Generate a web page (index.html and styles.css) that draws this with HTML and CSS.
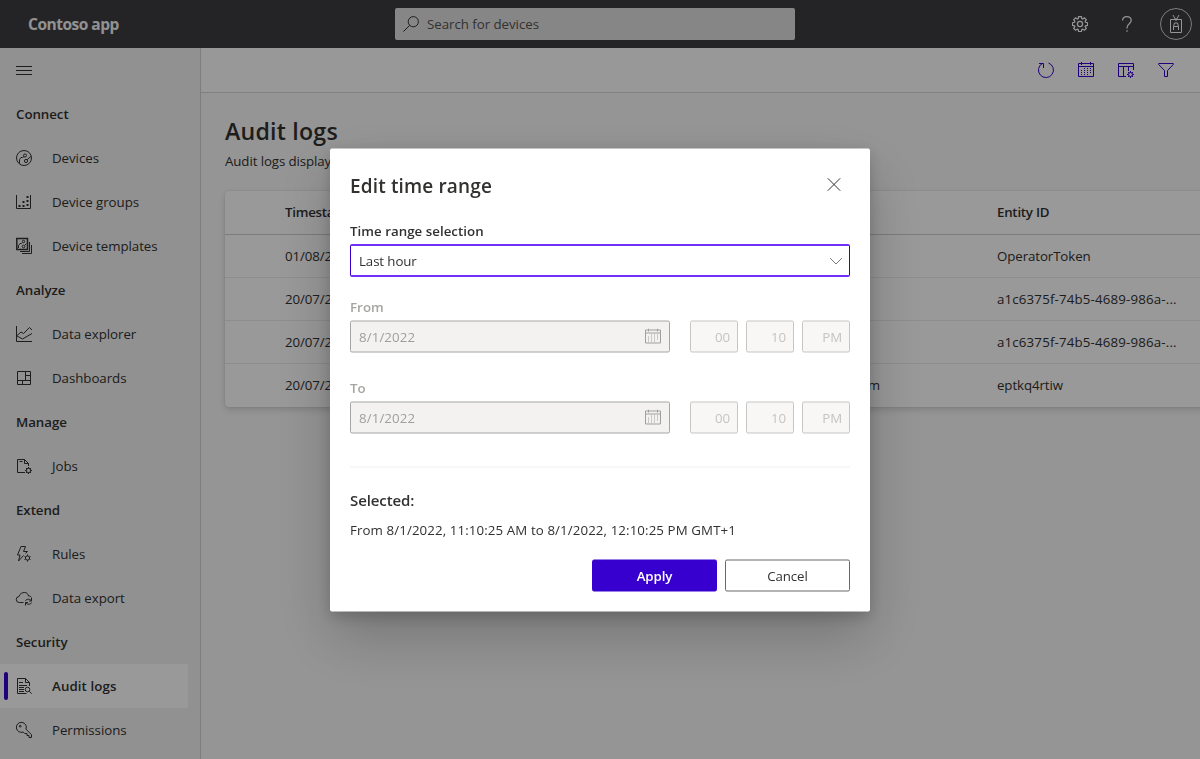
FILE: index.html
```html
<!DOCTYPE html>
<html lang="en">
<head>
<meta charset="utf-8">
<title>Audit logs</title>
<link rel="stylesheet" href="styles.css">
</head>
<body>
<svg class="defs" width="0" height="0" aria-hidden="true">
  <symbol id="cog" viewBox="0 0 16 16"><path d="M6.600.6h2.800l.4 2 .9.4 1.700-1.200 1.900 1.900L13.100 5.400l.4.9 2 .4v2.700l-2 .4-.4.9 1.200 1.700-1.900 1.900-1.700-1.200-.9.4-.4 2H6.600l-.4-2-.9-.4-1.700 1.200-1.900-1.900 1.200-1.700-.4-.9-2-.4V6.700l2-.4.4-.9L1.700 3.700l1.900-1.900L5.300 3l.9-.4z"/><circle cx="8" cy="8" r="2.600"/></symbol>
  <symbol id="calendar" viewBox="0 0 16 16"><path d="M.5 1.500h15v13H.5zM.5 4.500h15M3.500 0v3M12.500 0v3"/><path d="M6 6.500h7M3 8.500h10M3 10.500h10M3 12.500h7" stroke-dasharray="1 2"/></symbol>
</svg>
<div class="app">
  <header class="topbar">
    <div class="brand">Contoso app</div>
    <div class="search">
      <svg class="icon" viewBox="0 0 16 16"><circle cx="10.300" cy="5.700" r="5.100"/><path d="M6.600 9.400L.4 15.600"/></svg>
      <span>Search for devices</span>
    </div>
    <div class="tools">
      <svg class="icon gear"><use href="#cog"/></svg>
      <svg class="icon help" viewBox="0 0 16 16"><path d="M3.600 4.500C3.600 2 5.300.6 7.800.6s4.400 1.500 4.400 3.900C12.200 7.600 8 8 8 11.700v.8M8 14.300v1.500"/></svg>
      <div class="avatar"><svg viewBox="0 0 16 18"><path d="M2.500 4.500h11v13h-11zM5 0l2.500 4.500M11 0L8.500 4.500M8 3v3"/><path d="M5.500 15v-3.500h5V15M5.500 11.500l1-3.500h3l1 3.500" /></svg></div>
    </div>
  </header>
  <div class="body">
    <nav class="sidebar">
      <div class="row"><svg class="icon" viewBox="0 0 16 16"><path d="M0 4.500h16M0 8.500h16M0 12.500h16"/></svg></div>
      <div class="row group">Connect</div>
      <a class="row"><svg class="icon" viewBox="0 0 16 16"><circle cx="8" cy="8" r="7.500"/><circle cx="9" cy="5.500" r="1.500"/><circle cx="10" cy="11" r="1.600"/><path d="M3.500 13.500V9.500L5 7.500h1.500L8 6.500M11 9.800l4-3.500"/></svg><span>Devices</span></a>
      <a class="row"><svg class="icon" viewBox="0 0 16 16"><path d="M.5 1v13.500h14V1"/><path d="M3.500 10v3M7.500 6v7M11.500 1v12" stroke-width="2" stroke-dasharray="2 2" stroke-dashoffset="-1"/></svg><span>Device groups</span></a>
      <a class="row"><svg class="icon" viewBox="0 0 16 16"><path d="M.8.500h10.700v11H.8z" stroke-width="1.500"/><path d="M13.500 4v9.500H4M15.500 7v8.500H6"/><circle cx="7.500" cy="3.500" r="1.200"/><circle cx="7.500" cy="8.500" r="1.300"/><path d="M2.500 10V7.500l1.500-2h1.500l1-1M8.500 7.500l2-2"/></svg><span>Device templates</span></a>
      <div class="row group">Analyze</div>
      <a class="row"><svg class="icon" viewBox="0 0 16 16"><path d="M.5 0v15.500H16"/><path d="M1 9.500l4-3.500 2.500 1.500 6-6L16 4M1 10l5.500 3L16 7.500"/></svg><span>Data explorer</span></a>
      <a class="row"><svg class="icon" viewBox="0 0 16 16"><path d="M1.500 1.500h13v13h-13zM9.500 1.500v9M9.500 5.500h5M1.500 10.500h13M6.500 10.500v4"/></svg><span>Dashboards</span></a>
      <div class="row group">Manage</div>
      <a class="row"><svg class="icon" viewBox="0 0 16 16"><path d="M9 14.500H1.500V1.500h7l4 4V8M8.500 1.500v4h4M3.500 3.500h3"/><circle cx="12.500" cy="12.500" r="2.200"/><path d="M12.500 9v1.500M12.500 14.500V16M9 12.500h1.500M14.500 12.500H16M10 10l1 1M14 14l1 1M15 10l-1 1M11 14l-1 1"/></svg><span>Jobs</span></a>
      <div class="row group">Extend</div>
      <a class="row"><svg class="icon" viewBox="0 0 16 16"><path d="M7.500 9.500L2.500 15l1.500-6H1.500L5 .5h4.500L7.500 5.500h4L9.500 7.500"/><circle cx="11.500" cy="12" r="2.100"/><path d="M11.500 8.500V10M11.500 14v1.500M8.500 10.500l1.200.6M14.500 10.500l-1.200.6M8.500 13.500l1.200-.6M14.500 13.500l-1.200-.6"/></svg><span>Rules</span></a>
      <a class="row"><svg class="icon" viewBox="0 0 16 16"><path d="M7.500 12.500H3.500a3 3 0 01-.5-6C4 3.500 6 2.500 8.500 2.500S12 4 12.500 6c1.500 0 2.500.5 3 1.500"/><path d="M9.500 11c.5-2 4-2.500 5.500-.500M15.500 8v3H13M15.500 12.500c-.5 2-4 2.500-5.500.5M9.500 15.500v-3H12"/></svg><span>Data export</span></a>
      <div class="row group">Security</div>
      <a class="row active"><svg class="icon" viewBox="0 0 16 16"><path d="M10.500 15.500h-9V.5h8l4 4V8M9.500.5v4h4M3 4.500h4M3 7.500h8M3 9.500h5M3 11.500h5M3 13.500h5"/><circle cx="11.500" cy="11.500" r="2.300"/><path d="M13.200 13.200l2.500 2.500"/></svg><span>Audit logs</span></a>
      <a class="row"><svg class="icon" viewBox="0 0 16 16"><path d="M7.200 10A5 5 0 1110 7.200l5.500 5.500v2.800H13v-2h-2v-2H8.700z"/><circle cx="4.200" cy="4.200" r=".9"/></svg><span>Permissions</span></a>
    </nav>
    <main class="main">
      <div class="commands">
        <svg class="icon" viewBox="0 0 16 16"><path d="M10.500 1a7.500 7.500 0 11-6 .4M5.500 6V1.500H1"/></svg>
        <svg class="icon"><use href="#calendar"/></svg>
        <svg class="icon" viewBox="0 0 16 16"><path d="M8 14.500H.5v-13h15V8M.5 4.500h15M5.500 4.500v10M10.500 4.500V9"/><circle cx="12.500" cy="12.500" r="2"/><path d="M12.500 9v1.500M12.500 14.500V16M9 12.500h1.500M14.500 12.500H16M10 10l1 1M14 14l1 1M15 10l-1 1M11 14l-1 1"/></svg>
        <svg class="icon" viewBox="0 0 16 16"><path d="M.7 1.500h14.600v1L9.500 8.500v6h-3v-6L.7 2.500z"/></svg>
      </div>
      <h1>Audit logs</h1>
      <p class="intro">Audit logs display</p>
      <div class="table">
        <div class="tr th"><span class="time">Timestamp</span><span></span><span>Entity ID</span></div>
        <div class="tr"><span class="time">01/08/2022</span><span></span><span>OperatorToken</span></div>
        <div class="tr"><span class="time">20/07/2022</span><span></span><span class="guid">a1c6375f-74b5-4689-986a-...</span></div>
        <div class="tr"><span class="time">20/07/2022</span><span></span><span class="guid">a1c6375f-74b5-4689-986a-...</span></div>
        <div class="tr"><span class="time">20/07/2022</span><span class="user">com</span><span>eptkq4rtiw</span></div>
      </div>
    </main>
  </div>
</div>
<div class="overlay">
  <section class="dialog" role="dialog">
    <div class="dialog-head"><h2>Edit time range</h2><svg class="close" viewBox="0 0 14 14"><path d="M.8.8l12.400 12.400M13.200.8L.8 13.200"/></svg></div>
    <div class="label">Time range selection</div>
    <div class="select"><span>Last hour</span><svg viewBox="0 0 14 14"><path d="M1.200 4.200L7 10l5.800-5.800"/></svg></div>
    <div class="label muted">From</div>
    <div class="fields">
      <div class="date"><span>8/1/2022</span><svg class="icon"><use href="#calendar"/></svg></div>
      <div class="spin">00</div><div class="spin">10</div><div class="spin">PM</div>
    </div>
    <div class="label muted to">To</div>
    <div class="fields">
      <div class="date"><span>8/1/2022</span><svg class="icon"><use href="#calendar"/></svg></div>
      <div class="spin">00</div><div class="spin">10</div><div class="spin">PM</div>
    </div>
    <hr>
    <h3>Selected:</h3>
    <p class="range">From 8/1/2022, 11:10:25 AM to 8/1/2022, 12:10:25 PM GMT+1</p>
    <div class="actions"><button class="primary">Apply</button><button>Cancel</button></div>
  </section>
</div>
</body>
</html>
```
FILE: styles.css
```css
* { box-sizing: border-box; }
body {
  margin: 0;
  overflow: hidden;
  font: 13.3px/20px "Open Sans", "Noto Sans", sans-serif;
  letter-spacing: -0.1px;
  color: #323130;
}
h1, h2, h3, p { margin: 0; font-weight: 550; }
svg { fill: none; stroke: currentColor; stroke-width: 1; flex: none; overflow: visible; }
.defs { position: absolute; }
.icon { width: 16px; height: 16px; }
.app { height: 759px; display: flex; flex-direction: column; }

.topbar {
  height: 48px;
  flex: none;
  display: grid;
  grid-template-columns: 395px 400px 1fr;
  align-items: center;
  background: #3d3d40;
  color: #f8f8f8;
}
.brand { padding-left: 28px; font-size: 15.5px; font-weight: 700; letter-spacing: -0.5px; color: #f3f3f3; }
.search {
  height: 32px;
  border-radius: 2px;
  background: #e0e0e0;
  color: #55534f;
  display: flex;
  align-items: center;
  gap: 8px;
  padding-left: 8px;
  letter-spacing: -0.04px;
}
.search .icon { color: #323130; }
.tools { display: flex; justify-content: flex-end; align-items: center; padding-right: 8px; }
.gear, .help { stroke-width: 1.25; }
.help { margin: 0 25px 0 31px; }
.avatar {
  width: 32px;
  height: 32px;
  border: 1px solid #d0d0d0;
  border-radius: 50%;
  display: grid;
  place-items: center;
}
.avatar svg { width: 16px; height: 18px; }

.body { flex: 1; display: flex; min-height: 0; }
.sidebar { width: 201px; flex: none; background: #f2f2f2; border-right: 1px solid #d2d2d2; }
.row { height: 44px; width: 188px; display: flex; align-items: center; gap: 20px; padding-left: 16px; letter-spacing: -0.05px; }
.group { font-weight: 550; }
.active { position: relative; background: #fff; font-weight: 550; letter-spacing: .1px; }
.active::before {
  content: "";
  position: absolute;
  left: 4px;
  top: 8px;
  width: 4px;
  height: 28px;
  border-radius: 2px;
  background: #3700cf;
}

.main { flex: 1; min-width: 0; background: #f9f9f9; overflow: hidden; }
.commands {
  height: 45px;
  background: #fefefe;
  border-bottom: 1px solid #d6d6d6;
  display: flex;
  justify-content: flex-end;
  align-items: center;
  gap: 24px;
  padding-right: 26px;
  color: #3700cf;
}
h1 { margin: 22px 0 0 24px; font-size: 23.2px; line-height: 32px; letter-spacing: .2px; }
.intro { margin: 4px 0 0 24px; font-weight: 400; }
.table {
  margin: 20px 0 0 24px;
  width: 1000px;
  border-radius: 4px;
  background: #fff;
  box-shadow: 0 3px 7px rgba(0, 0, 0, .14), 0 0 2px rgba(0, 0, 0, .12);
}
.tr {
  height: 43px;
  display: grid;
  grid-template-columns: 60px 60px 535px 1fr;
  align-items: center;
  border-bottom: 1px solid #ececec;
}
.tr::before { content: ""; }
.tr:last-child { border-bottom-color: transparent; }
.th { height: 44px; padding-bottom: 1px; font-weight: 600; letter-spacing: -0.25px; border-color: #cfcfcf; }
.time { overflow: hidden; }
.tr > :last-child { padding-left: 117px; }
.tr > .guid { letter-spacing: .16px; }
.user { text-align: right; }

.overlay {
  position: fixed;
  inset: 0;
  display: flex;
  align-items: center;
  justify-content: center;
  background: rgba(0, 0, 0, .4);
}
.dialog {
  width: 540px;
  height: 463px;
  padding: 23px 20px 20px;
  border-radius: 2px;
  background: #fff;
  box-shadow: 0 25.6px 57.6px rgba(0, 0, 0, .22), 0 4.8px 14.4px rgba(0, 0, 0, .18);
  transform: translateY(.5px);
}
.dialog-head { display: flex; justify-content: space-between; height: 28px; padding-right: 9px; }
h2 { font-size: 19px; line-height: 28px; letter-spacing: .15px; }
.close { width: 14px; height: 14px; margin-top: 6px; }
.label { height: 24px; margin-top: 21px; font-weight: 550; letter-spacing: .03px; }
.muted { margin-top: 20px; color: #a6a5a4; font-weight: 600; }
.to { margin-top: 25px; }
.select, .date, .spin, button { height: 32px; border: 1px solid; border-radius: 2px; display: flex; align-items: center; }
.select {
  height: 33px;
  margin-bottom: -1px;
  border-width: 2px 1px;
  border-color: #7030f8 #3700cf;
  padding: 0 6px 0 8px;
  justify-content: space-between;
  transform: translateY(-.5px);
}
.select svg { width: 14px; height: 14px; color: #777; }
.fields { display: flex; gap: 8px; }
.date {
  width: 320px;
  margin-right: 12px;
  padding: 0 8px;
  justify-content: space-between;
  background: #f3f2f1;
  border-color: #a6a5a4;
  color: #a19f9d;
  letter-spacing: .1px;
}
.spin { width: 48px; padding-right: 7px; justify-content: flex-end; background: #f8f7f6; border-color: #c6c5c4; color: #c5c4c3; }
hr { margin: 33px 0 0; height: 1px; border: 0; background: #f0efee; }
h3 { margin-top: 22px; font-size: 15px; line-height: 20px; }
.range { margin-top: 10px; font-weight: 400; white-space: nowrap; letter-spacing: .1px; }
.actions { display: flex; justify-content: flex-end; gap: 8px; margin-top: 20px; }
button {
  width: 125px;
  padding: 0;
  justify-content: center;
  font: inherit;
  letter-spacing: inherit;
  color: #323130;
  background: #fff;
  border-color: #6a6968;
}
.primary { color: #fff; background: #3700cf; border-color: #3700cf; font-weight: 600; }
```
